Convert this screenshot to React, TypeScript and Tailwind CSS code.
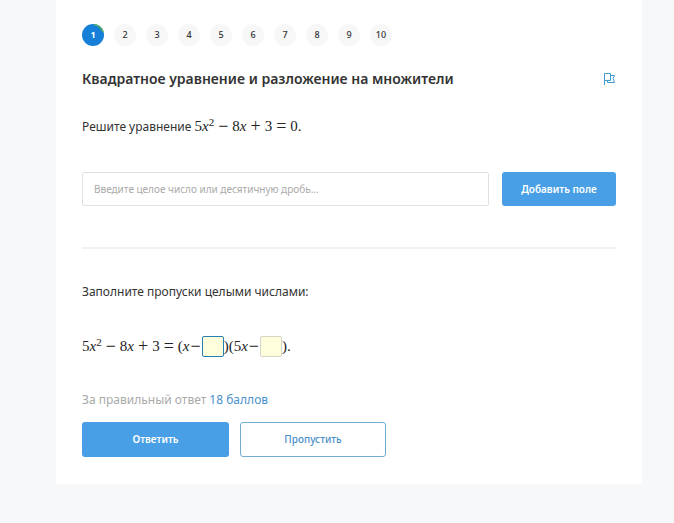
import { useState } from 'react';
import type { ReactNode } from 'react';

const steps = [1, 2, 3, 4, 5, 6, 7, 8, 9, 10];

const Formula = ({ children }: { children: ReactNode }) => (
  <span className="font-['Liberation_Serif',serif] text-[15px] leading-6 whitespace-nowrap text-[#222222]">{children}</span>
);

const Op = ({ children }: { children: ReactNode }) => (
  <span className="mx-1 align-[-1px] text-lg leading-none">{children}</span>
);

const Minus = () => <span className="mx-px align-[-1px] text-lg leading-none">−</span>;

const Quadratic = () => (
  <>
    5<i>x</i>
    <sup className="text-[11px]">2</sup>
    <Op>−</Op>8<i>x</i>
    <Op>+</Op>3<Op>=</Op>
  </>
);

const StepButton = ({ step, isActive, onSelect }: { step: number; isActive: boolean; onSelect: () => void }) => (
  <button
    type="button"
    onClick={onSelect}
    className={
      isActive
        ? 'relative size-[22px] rounded-full bg-[#1680d8] text-[9px] font-bold text-white'
        : 'relative size-[22px] rounded-full bg-[#f7f7f7] text-[9px] font-medium text-[#333333]'
    }
  >
    {isActive && (
      <svg viewBox="0 0 22 22" className="absolute inset-0 size-full" fill="none" aria-hidden="true">
        <path d="M12 .8A10.3 10.3 0 0 1 21 8" stroke="#55ad62" strokeWidth="1.5" />
      </svg>
    )}
    {step}
  </button>
);

const App = () => {
  const [activeStep, setActiveStep] = useState(1);
  const [answer, setAnswer] = useState('');
  const [first, setFirst] = useState('');
  const [second, setSecond] = useState('');

  return (
    <div className="min-h-screen bg-[#f6f8fa] pr-8 pb-10 pl-14 font-['Noto_Sans',sans-serif] text-[#333333]">
      <main className="bg-white px-[26px] pt-6 pb-[27px]">
        <nav className="flex gap-[10px]">
          {steps.map((step) => (
            <StepButton key={step} step={step} isActive={step === activeStep} onSelect={() => setActiveStep(step)} />
          ))}
        </nav>

        <div className="mt-[21px] flex items-center justify-between">
          <h1 className="text-sm leading-6 font-semibold">Квадратное уравнение и разложение на множители</h1>
          <button type="button" aria-label="Сообщить об ошибке" className="mr-px">
            <svg viewBox="0 0 12 12" className="size-3" fill="none" stroke="#3f9bd0" aria-hidden="true">
              <path d="M1.5 12V.5H7.5V7.5H1.5M7.5 2.5H11.5L10 5.5L11.5 9.5H4.5V7.5" />
            </svg>
          </button>
        </div>

        <p className="mt-[23px] text-xs leading-6">
          Решите уравнение{' '}
          <Formula>
            <Quadratic />
            0.
          </Formula>
        </p>

        <div className="mt-[33px] flex gap-[13px]">
          <input
            type="text"
            aria-label="Ответ"
            value={answer}
            onChange={(e) => setAnswer(e.target.value)}
            placeholder="Введите целое число или десятичную дробь..."
            className="h-[34px] min-w-0 flex-1 rounded-[2px] border border-[#e0e0e0] px-[11px] text-[10px] outline-none placeholder:text-[#aaaaaa]"
          />
          <button type="button" className="h-[34px] w-[114px] rounded-[3px] bg-[#489fe5] text-[10px] font-semibold text-white">
            Добавить поле
          </button>
        </div>

        <hr className="mt-[41px] border-t-2 border-[#f2f2f2]" />

        <p className="mt-[31px] text-xs leading-6">Заполните пропуски целыми числами:</p>

        <div className="mt-[30px] flex h-6 items-center">
          <Formula>
            <Quadratic />(<i>x</i>
            <Minus />
          </Formula>
          <input
            type="text"
            aria-label="Первый пропуск"
            value={first}
            onChange={(e) => setFirst(e.target.value)}
            className="h-[21px] w-[22px] rounded-[2px] border border-[#267fb5] bg-[#fffedc] text-center text-xs outline-none"
          />
          <Formula>
            )(5<i>x</i>
            <Minus />
          </Formula>
          <input
            type="text"
            aria-label="Второй пропуск"
            value={second}
            onChange={(e) => setSecond(e.target.value)}
            className="h-[21px] w-[22px] rounded-[2px] border border-[#d6d6c8] bg-[#fffedc] text-center text-xs outline-none"
          />
          <Formula>).</Formula>
        </div>

        <p className="mt-[30px] text-xs leading-6 text-[#aaaaaa]">
          За правильный ответ <span className="text-[#4a90c9]">18 баллов</span>
        </p>

        <div className="mt-[10px] flex gap-[11px]">
          <button type="button" className="h-[35px] w-[147px] rounded-[3px] bg-[#489fe5] text-[10px] font-semibold text-white">
            Ответить
          </button>
          <button
            type="button"
            className="h-[35px] w-[146px] rounded-[3px] border border-[#70add2] bg-white text-[10px] font-medium text-[#4a90c9]"
          >
            Пропустить
          </button>
        </div>
      </main>
    </div>
  );
};

export default App;
